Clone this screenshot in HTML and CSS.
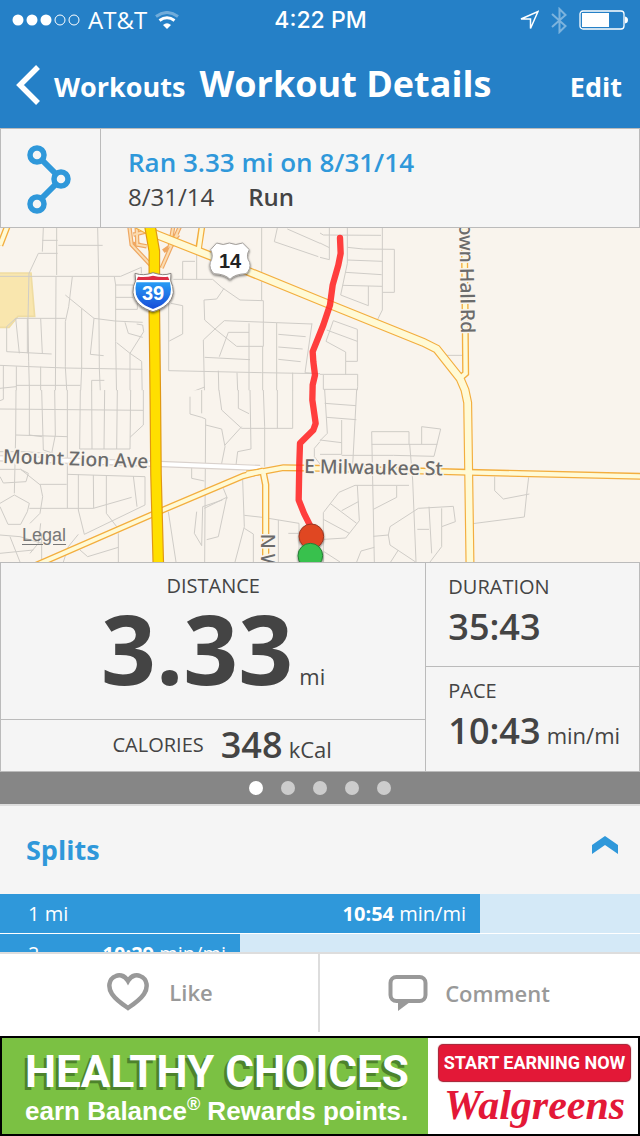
FILE: index.html
```html
<!DOCTYPE html>
<html lang="en">
<head>
<meta charset="utf-8">
<meta name="viewport" content="width=device-width, initial-scale=1">
<title>Workout Details</title>
<link rel="stylesheet" href="styles.css">
</head>
<body>
<header class="top">
  <div class="status">
    <div class="carrier">
      <svg width="68" height="12" viewBox="0 0 68 12" aria-hidden="true"><g fill="#fff"><circle cx="6" cy="6" r="5.5"/><circle cx="20" cy="6" r="5.5"/><circle cx="34" cy="6" r="5.5"/></g><g fill="none" stroke="#fff"><circle cx="48" cy="6" r="5"/><circle cx="62" cy="6" r="5"/></g></svg>
      <span>AT&amp;T</span>
      <svg width="24" height="18" viewBox="0 0 24 18" fill="none" stroke="#fff" stroke-width="3" aria-hidden="true"><path d="M1 5.500Q12-2.500 23 5.500" opacity=".35"/><path d="M4.500 9.500Q12 4 19.500 9.500"/><path d="M8 14Q12 10.500 16 14L12 18Z" fill="#fff" stroke="none"/></svg>
    </div>
    <time class="clock">4:22 PM</time>
    <div class="indicators">
      <svg width="20" height="21" viewBox="0 0 20 21" fill="none" stroke="#fff" stroke-width="1.500" aria-hidden="true"><path d="M2 9 19 1.500 11.500 18.500V9Z"/></svg>
      <svg width="16" height="27" viewBox="0 0 16 27" fill="none" stroke="#fff" stroke-width="2" opacity=".4" aria-hidden="true"><path d="M1 7 14.500 19 8.500 25V2L14.500 8 1 20"/></svg>
      <svg width="50" height="20" viewBox="0 0 50 20" aria-hidden="true"><rect x="1" y="1" width="44" height="18" rx="3" fill="none" stroke="#fff" stroke-width="1.300"/><path d="M3 3H30V17H3ZM46 6.500Q49 7 49 10T46 13.500Z" fill="#fff"/></svg>
    </div>
  </div>
  <nav class="nav">
    <a class="back" href="#workouts"><svg class="chevron" width="25" height="40" viewBox="0 0 25 40" fill="none" stroke="#fff" stroke-width="5.500" aria-hidden="true"><path d="M22 2 4 20 22 38"/></svg><span>Workouts</span></a>
    <h1 class="title">Workout Details</h1>
    <a class="edit" href="#edit">Edit</a>
  </nav>
</header>

<main class="content">
  <section class="summary">
    <div class="route">
      <svg width="44" height="70" viewBox="0 0 44 70" fill="none" stroke="#2f98da" stroke-width="5.500" aria-hidden="true"><path d="M15 16 28 29M28 41 15 54" stroke-width="6"/><circle cx="10" cy="11" r="7"/><circle cx="34" cy="35" r="7"/><circle cx="10" cy="60" r="7"/></svg>
    </div>
    <div class="summary-text">
      <h2 class="headline">Ran 3.33 mi on 8/31/14</h2>
      <p class="meta"><span>8/31/14</span><strong>Run</strong></p>
    </div>
  </section>

  <section class="map" aria-label="Route map">
    <svg class="map-art" viewBox="0 0 1920 1002">
      <defs>
        <linearGradient id="shield" x1="0" y1="0" x2="0" y2="1"><stop offset="0" stop-color="#279bf5"/><stop offset="1" stop-color="#174cd8"/></linearGradient>
        <filter id="shadow" x="-20%" y="-20%" width="140%" height="150%"><feDropShadow dx="0" dy="4" stdDeviation="3" flood-opacity=".55"/></filter>
        <clipPath id="upper"><rect width="1920" height="487"/></clipPath>
        <path id="us14" d="M385-25 470 20 632 84 960 218 1270 343 1310 363 1380 451 1395 486 1403 524 1406 731 1410 1010"/>
        <path id="townhall" d="M1393-5 1397 436 1380 451"/>
        <path id="milwaukee" d="M740 738 790 730 850 719 960 721 1405 733 1925 745"/>
        <path id="diagonal" d="M100 1015 460 858 730 744 790 728"/>
        <path id="north" d="M790 735 797 770V1010"/>
        <path id="i39" d="M450-5 463 70V250L466 515 468 740 475 1010"/>
      </defs>
      <rect width="1920" height="1002" fill="#f9f4ed"/>
      <path d="M-5 135H93L104 265H54L27 298H-5Z" fill="#f9e6ae" stroke="#efdca2" stroke-width="5"/>

      <g fill="none" stroke="#cfccc7" stroke-width="3">
        <g clip-path="url(#upper)">
          <g transform="translate(0 -9)">
            <path d="M130 9 127 80M127 46H173M170 9V150M175 61H308M293 9 296 155 298 430 302 525M173 85H115L87 145 84 280 86 410 89 525M0 154H362L424 127V145M168 154 166 525M217 155 206 245 196 290V425L202 525M196 210 245 250 282 280 271 388 311 392M245 250V430L241 525M282 280 345 288 428 292M343 155 347 180V350L350 525M347 180H400M347 217H400M347 253H412V230M375 292 385 325 428 337M410 297 428 300 431 320 390 385V525M350 353 390 385 425 409 427 525M47 280H196M20 305 47 280 58 385M20 305V380L155 387M82 280V385M122 280 127 385M0 421 90 425 196 429 427 433M10 421V525M49 424V525M122 425V525M0 490 48 485M48 481H241M313 466H275V525M585 109H548V163M590 90V163M520 163H638L665 187 720 225 790 227M672 190 650 222 612 225 614 285 645 312 710 364H790V227M785 9V225M513 235 548 242V327L508 348M506 235V437L785 443 960 446M614 525 610 345 645 312 673 287 830 293 936 297M655 437 657 525M711 443 714 525M747 295V525M788 364V525M658 395 685 322H747M614 397 750 404M830 293V525M835 328 917 335M835 366 908 372M835 403 902 410M936 295 915 443 960 446M570 525V503L614 486M832 9 823 50 955 95M862 12 960 55M878 443V525"/>
          </g>
          <g transform="translate(960 -9)">
            <path d="M28 9V104L0 97M0 24 10 30 183 31M0 54 28 68M82 9V115L62 210 145 242V183M82 67 130 72 223 73V202H188M82 105 187 109M77 142 185 149M68 181 186 184M187 9V255L172 285M40 287 112 313V409H77V449M40 287 18 349 77 381V409M20 315 112 349M0 448H113V485L109 525M10 450V493H113M14 493V525M378 391H430"/>
          </g>
        </g>
        <g transform="translate(0 486)">
          <path d="M0 57 430 61M10 0V28L0 32M48 0 47 135 43 310M88 0V135L126 140M125 0 130 180 160 190M164 0 166 135 155 190M202 0V355M241 0 239 177H390M275 0 276 177M314 0 312 177M352 0 350 177M392 0 390 177M430 0V105L390 142M48 135 202 140M0 185H75L140 190M0 238 62 238 85 250 78 275 10 279 0 260M62 238 121 285 128 320 120 370 90 400M43 315 88 340 82 365 62 403H24L0 350M0 340 43 315M88 355H280L395 322M202 253 435 260V345L253 433 235 360V253M280 255 281 355M319 255V370L350 410M400 258 411 350M120 283H200M355 430V516M240 480 263 500 355 472M122 400 115 460 90 490M0 435 60 440 125 460M0 490 100 480M125 430V516M235 433 205 470 190 516M30 440 60 516M570 20V72L605 82 617 87 614 516M605 0V70M617 105 665 117 675 170 664 225M725 110 675 165M657 0 665 60 725 115H878V0M715 0V55L747 71M750 0 753 177 713 185 708 225M790 0 794 110V230M832 0V115M575 230V265L613 273M613 355 680 322 655 440 620 449M590 365 583 430 605 467 608 350 667 330M670 295 682 325M728 270 733 410 705 516M733 376 787 382 897 400V516M733 415 760 432V516M835 390V516M865 430H897M505 365 528 516M960 155 943 175V200L960 222"/>
        </g>
        <g transform="translate(960 486)">
          <path d="M14 0 22 130 0 152M14 40 108 47M110 0 98 225M20 82 109 89M65 90V193H0M0 150 65 158M65 196H220L342 199 362 117 305 110V162M155 125H267V162M155 163H352M155 125 163 516M269 162 278 270 288 516M105 286H267M105 286 57 307 10 368V516M112 286 118 392 77 444 12 448M30 340 110 400M65 362 115 335M10 388 88 430M230 288V322L160 358M160 439 205 435 210 410 295 355 400 349 406 395 365 410V470L330 516M205 435 210 465 287 516M327 350 335 490M365 355V410M292 418H327M235 480 212 516M12 485 60 516M110 516 123 483 163 472M524 260V302L550 327 628 312M626 262 620 312 613 381 458 401"/>
        </g>
      </g>

      <g fill="none" stroke="#efa762" stroke-width="13"><path d="M388-5 395 50 465 125M400 20 440 10M410-5 412 50 440 55M540-5 485 120M520-5 510 50 535 20M400 48 420 50M490 70 525 45"/><path d="M388-5 395 50 465 125M400 20 440 10M410-5 412 50 440 55M540-5 485 120M520-5 510 50 535 20" stroke="#fbdcb0" stroke-width="6"/></g>
      <path d="M0 691 480 708 780 720" fill="none" stroke="#d9d1cc" stroke-width="19"/>
      <path d="M0 691 480 708 780 720" fill="none" stroke="#fff" stroke-width="12"/>
      <g fill="none" stroke="#f3ae3f">
        <path d="M606-5 596 60M22-5 0 52" stroke-width="20"/>
        <use href="#us14" stroke-width="27"/><use href="#townhall" stroke-width="21"/><use href="#milwaukee" stroke-width="21"/><use href="#diagonal" stroke-width="20"/><use href="#north" stroke-width="22"/>
      </g>
      <g fill="none" stroke="#fffad5">
        <path d="M606-5 596 65M22-5 0 52" stroke-width="12"/>
        <use href="#us14" stroke-width="20"/><use href="#townhall" stroke-width="13"/><use href="#milwaukee" stroke-width="13"/><use href="#diagonal" stroke-width="12"/><use href="#north" stroke-width="14"/>
      </g>
      <use href="#i39" fill="none" stroke="#df9714" stroke-width="35"/>
      <use href="#i39" fill="none" stroke="#ffdf00" stroke-width="28"/>

      <g class="street" stroke="#f9f4ed" stroke-width="10" paint-order="stroke" stroke-linejoin="round">
        <text x="8" y="705" transform="rotate(2 8 705)">Mount Zion Ave</text>
        <text x="912" y="735" transform="rotate(1 912 735)">E Milwaukee St</text>
        <text x="1377" y="-41" transform="rotate(89 1377 -41)">Town Hall Rd</text>
        <text x="784" y="917" transform="rotate(90 784 917)">N Wright Rd</text>
      </g>

      <path d="M1020 30 1022 76 1015 111 998 171 990 231 970 291 938 371 940 401 945 441 938 471 937 516 947 586 940 606 900 646 898 706 896 816 912 856 932 896" fill="none" stroke="#ff2424" stroke-opacity=".88" stroke-width="19" stroke-linejoin="round" stroke-linecap="round"/>
      <g stroke-width="3" filter="url(#shadow)"><circle cx="934" cy="925" r="37" fill="#e04722" stroke="#9b3722"/><circle cx="931" cy="983" r="37" fill="#39c14d" stroke="#277d36"/></g>

      <g filter="url(#shadow)">
        <path d="M405 136Q430 145 459 134 490 145 513 136L512 158Q520 175 520 193C516 225 489 242 459 251 428 242 403 225 399 193Q398 174 407 158Z" fill="#fff" stroke="#8b8580" stroke-width="3"/>
        <path d="M414 146Q438 149 459 143 482 149 504 146L508 156H410Z" fill="#dc2f44"/>
        <path d="M409 163H510Q515 183 511 199C503 222 483 235 459 243 435 235 415 222 408 199Q404 182 409 163Z" fill="url(#shield)"/>
        <path d="M650 45Q670 54 688 45 707 54 728 45L748 65Q736 85 749 103 754 123 738 137 704 138 690 154 675 138 642 137 626 122 631 103 642 85 632 65Z" fill="#fff" stroke="#a39f9b" stroke-width="3"/>
      </g>
      <g class="shield-text" text-anchor="middle"><text x="459" y="215" fill="#fff">39</text><text x="690" y="120" fill="#222">14</text></g>
    </svg>
    <a class="legal" href="#legal">Legal</a>
  </section>

  <section class="stats">
    <div class="primary">
      <div class="distance"><h3 class="label">DISTANCE</h3><p><b class="huge">3.33</b> <span class="unit">mi</span></p></div>
      <div class="calories"><h3 class="label">CALORIES</h3><p><b class="value">348</b> <span class="unit">kCal</span></p></div>
    </div>
    <div class="secondary">
      <div class="side"><h3 class="label">DURATION</h3><p><b class="value">35:43</b></p></div>
      <div class="side"><h3 class="label">PACE</h3><p><b class="value">10:43</b> <span class="unit">min/mi</span></p></div>
    </div>
  </section>

  <div class="pager">
    <button class="dot current" aria-label="Page 1"></button><button class="dot" aria-label="Page 2"></button><button class="dot" aria-label="Page 3"></button><button class="dot" aria-label="Page 4"></button><button class="dot" aria-label="Page 5"></button>
  </div>

  <section>
    <button class="splits-head" aria-expanded="true"><span>Splits</span><svg width="26" height="18" viewBox="0 0 26 18" aria-hidden="true"><path d="M0 9 13 0 26 9V18L13 9 0 18Z" fill="#2f98da"/></svg></button>
    <ol class="splits">
      <li class="split"><div class="bar" style="width:75%"><span>1 mi</span><span><b>10:54</b> min/mi</span></div></li>
      <li class="split"><div class="bar" style="width:37.5%"><span>2</span><span><b>10:29</b> min/mi</span></div></li>
    </ol>
  </section>
</main>

<footer>
  <div class="actions">
    <button class="action like"><svg width="42" height="38" viewBox="0 0 42 38" fill="none" stroke="#999" stroke-width="4.500" aria-hidden="true"><path d="M21 8C17 1 11 2 9 3 1 6 1 15 5 21 9 27 15 31 21 35 27 31 33 27 37 21 41 15 41 6 33 3 31 2 25 1 21 8Z"/></svg>Like</button>
    <button class="action comment"><svg width="40" height="38" viewBox="0 0 40 38" aria-hidden="true"><rect x="2.500" y="3" width="35" height="24" rx="6" fill="none" stroke="#999" stroke-width="4"/><path d="M10 28H22L10 37Z" fill="#999"/></svg>Comment</button>
  </div>
  <a class="ad" href="#offer">
    <span class="ad-copy"><span class="ad-title">HEALTHY CHOICES</span><span class="ad-sub">earn Balance<sup>®</sup> Rewards points.</span></span>
    <span class="ad-side"><span class="ad-cta">START EARNING NOW</span><span class="ad-brand">Walgreens</span></span>
  </a>
</footer>
</body>
</html>
```
FILE: styles.css
```css
* { box-sizing: border-box; }
body {
  margin: 0;
  height: 100vh;
  display: flex;
  flex-direction: column;
  overflow: hidden;
  background: #f5f5f5;
  color: #444;
  font-family: "Open Sans", "Noto Sans", sans-serif;
}
h1, h2, h3, p, ol { margin: 0; padding: 0; }
h3 { font-weight: 400; }
a { color: inherit; text-decoration: none; }
button { border: 0; padding: 0; background: none; color: inherit; font: inherit; }
svg { display: block; flex: none; }

.top { background: #2580c7; color: #fff; }
.status {
  height: 40px;
  display: grid;
  grid-template-columns: 1fr auto 1fr;
  align-items: center;
  padding: 0 11px 0 12px;
}
.carrier { display: flex; align-items: center; gap: 8px; font-size: 24px; line-height: 40px; }
.clock { font: 500 23px/40px Inter, "Liberation Sans", sans-serif; }
.indicators { display: flex; align-items: center; justify-content: flex-end; gap: 12px; }
.nav {
  height: 88px;
  display: flex;
  align-items: baseline;
  padding: 14px 18px 0 16px;
  font-size: 27px;
  font-weight: 700;
  line-height: 60px;
}
.back { display: flex; align-items: baseline; gap: 13px; }
.chevron { align-self: center; margin-bottom: 4px; }
.title { margin-left: 14px; font-size: 36px; font-weight: 700; line-height: 60px; white-space: nowrap; }
.edit { margin-left: auto; }

.content { flex: 1; min-height: 0; overflow: hidden; }
.summary {
  min-height: 100px;
  display: flex;
  border: 1px solid #bbb;
}
.route { width: 100px; display: grid; place-items: center; padding: 2px 3px 0 0; border-right: 1px solid #bbb; }
.summary-text { padding: 17px 27px 0; }
.headline { color: #2f98da; font-size: 26px; font-weight: 600; line-height: 33px; }
.meta { display: flex; gap: 34px; font-size: 24px; line-height: 36px; }
.meta strong { font-weight: 600; }

.map { position: relative; }
.map-art { width: 100%; height: auto; }
.street { font-family: "Noto Sans", sans-serif; font-size: 58px; font-weight: 500; fill: #6b6b6b; }
.shield-text { font-family: "Liberation Sans", sans-serif; font-size: 60px; font-weight: 700; }
.legal {
  position: absolute;
  left: 22px;
  bottom: 15px;
  color: #777;
  font: 18px/24px "Liberation Sans", sans-serif;
  text-decoration: underline;
  text-underline-offset: 3px;
}

.stats {
  display: grid;
  grid-template-columns: 2fr 1fr;
  border: 1px solid #bbb;
}
.primary { border-right: 1px solid #bbb; }
.label { font-size: 20px; line-height: 26px; }
.value { font-size: 36px; font-weight: 600; line-height: 50px; }
.unit { margin-left: 2px; font-size: 22px; }
.distance { height: 157px; padding-top: 10px; text-align: center; border-bottom: 1px solid #bbb; }
.huge { font-size: 96px; font-weight: 700; line-height: 98px; }
.calories { display: flex; align-items: center; justify-content: center; gap: 17px; height: 50px; padding-left: 18px; }
.side { height: 103px; padding: 11px 0 0 22px; }
.side + .side { height: 105px; border-top: 1px solid #bbb; }
.side .value { line-height: 54px; }

.pager { height: 32px; display: flex; align-items: center; justify-content: center; gap: 18px; background: #868686; }
.dot { width: 14px; height: 14px; border-radius: 50%; background: #ccc; }
.current { background: #fff; }
.splits-head {
  width: 100%;
  height: 90px;
  display: flex;
  align-items: center;
  justify-content: space-between;
  padding: 0 22px 2px 26px;
  border-top: 2px solid #ddd;
  color: #2f98da;
  font-size: 27px;
  font-weight: 700;
}
.splits-head svg { margin-bottom: 8px; }
.splits { list-style: none; }
.split { background: #d4e9f7; border-bottom: 1px solid #fff; }
.bar {
  height: 39px;
  display: flex;
  justify-content: space-between;
  padding: 0 14px 0 28px;
  background: #2f98da;
  color: #fff;
  font-size: 20px;
  line-height: 40px;
}

.actions {
  height: 84px;
  display: grid;
  grid-template-columns: 1fr 1fr;
  border-top: 2px solid #ddd;
  padding-bottom: 4px;
  background: #fff;
  color: #999;
}
.action { display: flex; align-items: center; justify-content: center; gap: 20px; font-size: 22px; font-weight: 600; }
.like { padding: 0 0 2px 2px; border-right: 2px solid #ddd; }
.comment { gap: 17px; padding-right: 22px; }

.ad {
  height: 100px;
  display: grid;
  grid-template-columns: minmax(0, 67fr) minmax(0, 33fr);
  border: 2px solid #000;
  background: #fff;
  font-family: "Liberation Sans", sans-serif;
  font-weight: 700;
}
.ad-copy { display: flex; flex-direction: column; padding: 9px 0 0 23px; background: #7bc143; color: #fff; white-space: nowrap; }
.ad-title { font-family: Roboto, sans-serif; font-size: 44px; line-height: 50px; text-shadow: -3px 3px 0 #4d832b; }
.ad-sub { font-size: 26px; line-height: 28px; }
.ad-sub sup { font-size: 18px; line-height: 0; }
.ad-side { display: flex; flex-direction: column; padding: 7px 8px 0 11px; text-align: center; white-space: nowrap; }
.ad-cta { border-radius: 4px; background: #e31837; color: #fff; font-family: Roboto, sans-serif; font-size: 18px; line-height: 36px; box-shadow: 0 0 1px 1px #a01428; }
.ad-brand { color: #e31837; font: italic 700 42px/48px "Liberation Serif", serif; }
```
